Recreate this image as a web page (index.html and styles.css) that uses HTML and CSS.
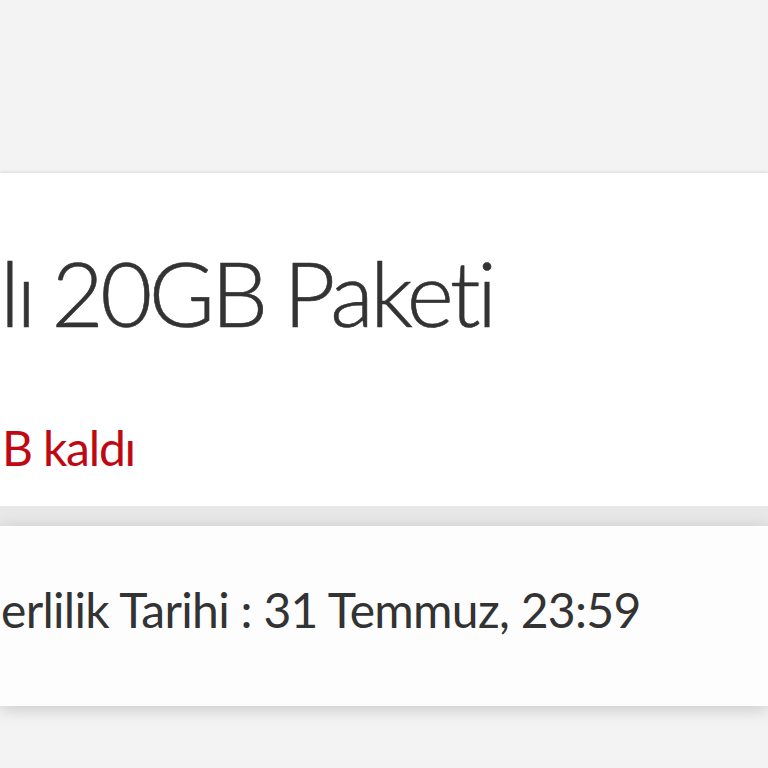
FILE: index.html
```html
<!DOCTYPE html>
<html lang="tr">
<head>
    <meta charset="UTF-8">
    <title>Paket Detayı</title>
    <link rel="stylesheet" href="styles.css">
</head>
<body>
    <div id="page">
        <div class="top-space"></div>

        <div class="card package">
            <h1 class="package-name">lı 20GB Paketi</h1>
            <p class="remaining">B kaldı</p>
        </div>

        <div class="gap"></div>

        <div class="card validity">
            <p class="date">erlilik Tarihi : 31 Temmuz, 23:59</p>
        </div>

        <div class="bottom-space"></div>
    </div>
</body>
</html>
```

FILE: styles.css
```css
*{
    margin: 0;
    padding: 0;
}
html,body{
    background: #f3f3f3;
    overflow: hidden;
}
body{
    font-family: "Lato", "Roboto", sans-serif;
    color: #333;
}
#page{
    width: 768px;
}
.top-space{
    height: 173px;
}
.card{
    background: #fff;
    box-shadow: 0 -1px 3px rgba(0,0,0,0.1);
    white-space: nowrap;
    box-sizing: border-box;
}
.package{
    height: 333px;
    padding-top: 74px;
}
.package-name{
    font-weight: 300;
    font-size: 90px;
    line-height: 90px;
    letter-spacing: -3.6px;
    word-spacing: -2px;
    -webkit-text-stroke: 0.6px #333;
}
.remaining{
    color: #c00812;
    font-weight: 400;
    font-size: 48px;
    line-height: 48px;
    letter-spacing: -1.2px;
    margin-top: 87px;
    padding-left: 2px;
}
.gap{
    height: 20px;
    background: #e8e8e8;
}
.validity{
    height: 180px;
    padding-top: 60px;
    background: #fdfdfd;
    box-shadow: 0 3px 16px rgba(0,0,0,0.18);
}
.date{
    font-weight: 400;
    font-size: 48px;
    line-height: 48px;
    letter-spacing: -0.7px;
    padding-left: 1px;
}
.bottom-space{
    height: 63px;
}
```
